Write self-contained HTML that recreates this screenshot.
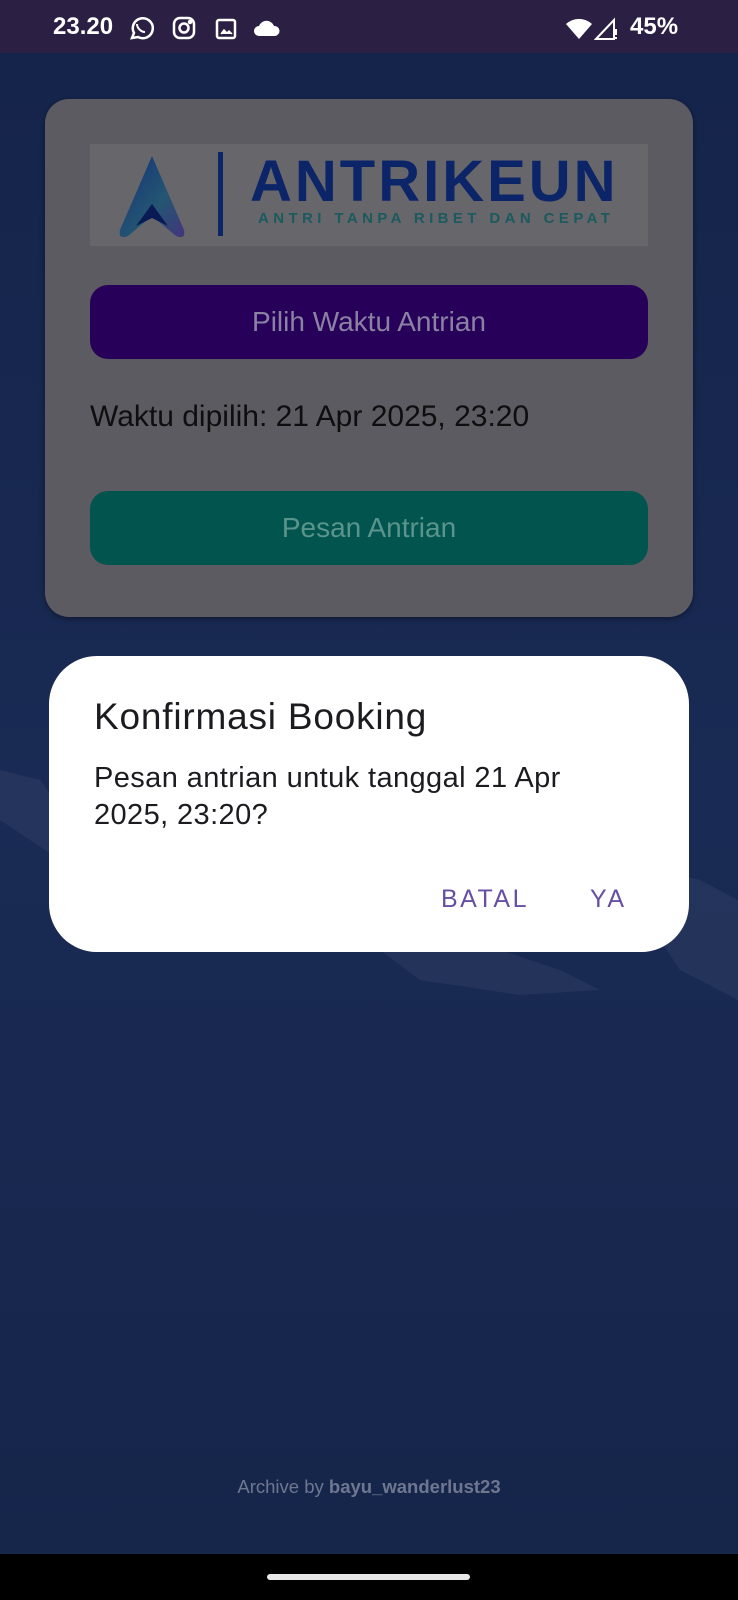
<!DOCTYPE html>
<html><head><meta charset="utf-8"><style>
*{margin:0;padding:0;box-sizing:border-box}
body{width:738px;height:1600px;overflow:hidden;background:#182a50;font-family:"Liberation Sans","DejaVu Sans",sans-serif;position:relative}
.abs{position:absolute}
.status{left:0;top:0;width:738px;height:53px;background:#2b2043;color:#fff;font-size:24px;font-weight:bold}
.bg{left:0;top:53px;width:738px;height:1501px;background:linear-gradient(#15244a,#192a54 50%,#16254a)}
.card{left:45px;top:99px;width:648px;height:518px;background:#5c5b61;border-radius:24px;box-shadow:0 2px 6px rgba(0,0,0,.4)}
.logo{left:90px;top:144px;width:558px;height:102px;background:#66666b}
.btn{left:90px;width:558px;height:74px;border-radius:18px;text-align:center;line-height:74px;font-size:28px}
.dlg{left:49px;top:656px;width:640px;height:296px;background:#fff;border-radius:48px}
.nav{left:0;top:1554px;width:738px;height:46px;background:#000}
</style></head><body>
<div class="abs bg"></div>
<svg class="abs" style="left:0;top:740px" width="738" height="320" opacity="0.06">
<path d="M0 30 L40 40 L70 80 L60 120 L30 100 L0 80Z" fill="#ccd"/>
<path d="M380 190 L470 200 L560 230 L600 250 L520 255 L420 240 L380 210Z" fill="#ccd"/>
<path d="M620 120 L700 140 L738 160 L738 260 L680 230 L640 170Z" fill="#ccd"/>
</svg>
<div class="abs status">
<span class="abs" style="left:53px;top:13px">23.20</span>
<svg class="abs" style="left:128px;top:15px" width="26" height="26" viewBox="0 0 26 26" fill="none" stroke="#fff" stroke-width="2.5"><path d="M4 23l2-5a10 10 0 1 1 4 4z"/><path d="M9 9c0 4 4 8 8 8" stroke-width="2"/></svg>
<svg class="abs" style="left:172px;top:16px" width="24" height="24" viewBox="0 0 24 24" fill="none" stroke="#fff" stroke-width="2.5"><rect x="2" y="2" width="20" height="20" rx="6"/><circle cx="12" cy="12" r="4.5"/><circle cx="18" cy="6" r="1" fill="#fff"/></svg>
<svg class="abs" style="left:215px;top:18px" width="22" height="22" viewBox="0 0 22 22" fill="none" stroke="#fff" stroke-width="2.5"><rect x="2" y="2" width="18" height="18" rx="2"/><path d="M6 16l3-4 3 3 2-2 3 3" fill="#fff" stroke-width="1.5"/></svg>
<svg class="abs" style="left:253px;top:19px" width="28" height="18" viewBox="0 0 28 18"><path d="M6 17a5 5 0 0 1 0-10a8 8 0 0 1 15 0a5 5 0 0 1 1 10z" fill="#fff"/></svg>
<svg class="abs" style="left:565px;top:18px" width="28" height="22" viewBox="0 0 28 22"><path d="M1 6a19 19 0 0 1 26 0L14 21z" fill="#fff"/></svg>
<svg class="abs" style="left:594px;top:17px" width="26" height="24" viewBox="0 0 26 24" fill="none" stroke="#fff" stroke-width="2"><path d="M2 22L20 3v19z"/><path d="M22 12v6M22 20v2" stroke-width="2"/></svg>
<span class="abs" style="left:630px;top:13px">45%</span>
</div>
<div class="abs card"></div>
<div class="abs logo">
<svg class="abs" style="left:24px;top:8px" width="80" height="90" viewBox="0 0 80 90">
<defs><linearGradient id="g" x1="0" x2="1" y1="0" y2="1"><stop offset="0" stop-color="#15307a"/><stop offset="0.6" stop-color="#245672"/><stop offset="1" stop-color="#42357c"/></linearGradient></defs>
<path d="M38 4 L6 78 Q4 88 14 84 L38 64 L62 84 Q72 88 70 78Z" fill="url(#g)"/>
<path d="M38 52 L22 74 L38 66 L54 74Z" fill="#0a1a55"/>
</svg>
<div class="abs" style="left:128px;top:8px;width:5px;height:84px;background:#0c2468"></div>
<div class="abs" style="left:160px;top:4px;font-size:58px;font-weight:bold;color:#0c2468;letter-spacing:3px">ANTRIKEUN</div>
<div class="abs" style="left:168px;top:66px;font-size:15px;font-weight:bold;color:#1b5a5e;letter-spacing:4.4px">ANTRI TANPA RIBET DAN CEPAT</div>
</div>
<div class="abs btn" style="top:285px;background:#27005a;color:#8a82a2">Pilih Waktu Antrian</div>
<div class="abs" style="left:90px;top:400px;font-size:30px;color:#0e0e10">Waktu dipilih: 21 Apr 2025, 23:20</div>
<div class="abs btn" style="top:491px;background:#01554e;color:#5a948d">Pesan Antrian</div>
<div class="abs dlg">
<div class="abs" style="left:45px;top:40px;font-size:37px;letter-spacing:0.8px;color:#1c1b1f">Konfirmasi Booking</div>
<div class="abs" style="left:45px;top:104px;font-size:29px;letter-spacing:0.4px;line-height:37px;color:#1c1b1f;width:500px">Pesan antrian untuk tanggal 21 Apr 2025, 23:20?</div>
<div class="abs" style="left:392px;top:229px;font-size:25px;color:#6750a4;letter-spacing:2.5px">BATAL</div>
<div class="abs" style="left:541px;top:229px;font-size:25px;color:#6750a4;letter-spacing:2.5px">YA</div>
</div>
<div class="abs" style="left:0;top:1476px;width:738px;text-align:center;font-size:18.5px;color:#6f7790">Archive by <b>bayu_wanderlust23</b></div>
<div class="abs nav"><div class="abs" style="left:267px;top:20px;width:203px;height:6px;border-radius:3px;background:#e8e8e8"></div></div>
</body></html>
